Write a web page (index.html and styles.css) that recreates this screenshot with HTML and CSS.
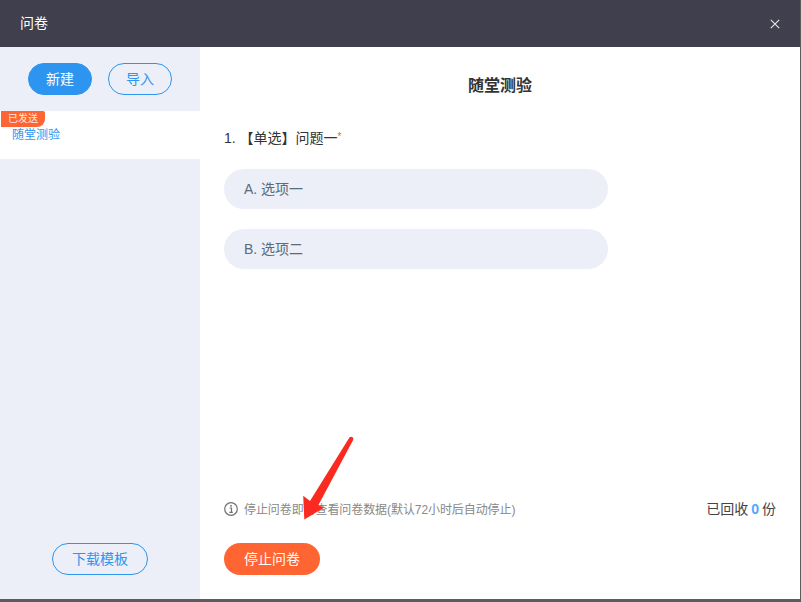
FILE: index.html
```html
<!DOCTYPE html>
<html lang="zh">
<head>
<meta charset="utf-8">
<title>问卷</title>
<link rel="stylesheet" href="styles.css">
</head>
<body>
<div class="dialog">
  <header class="header">
    <span class="header-title">问卷</span>
    <svg class="close" width="10" height="10" viewBox="0 0 10 10"><path d="M.8.8l8.400 8.400M9.200.8L.8 9.200" stroke="#e6e6ea" stroke-width="1.100" fill="none"/></svg>
  </header>
  <div class="body">
    <aside class="sidebar">
      <div class="side-actions">
        <button class="btn btn-solid">新建</button>
        <button class="btn btn-line">导入</button>
      </div>
      <div class="side-item">
        <span class="badge">已发送</span>
        <span class="side-name">随堂测验</span>
      </div>
      <div class="side-foot">
        <button class="btn btn-line btn-wide">下载模板</button>
      </div>
    </aside>
    <main class="main">
      <h1 class="title">随堂测验</h1>
      <p class="question">1. 【单选】问题一<sup class="req">*</sup></p>
      <div class="option">A. 选项一</div>
      <div class="option">B. 选项二</div>
      <div class="foot">
        <div class="foot-row">
          <div class="hint">
            <svg width="14" height="14" viewBox="0 0 14 14"><circle cx="7" cy="7" r="6.300" fill="none" stroke="#707070" stroke-width="1.200"/><rect x="6.200" y="3" width="1.600" height="1.600" fill="#707070"/><path d="M5.600 6h1.900v4.100M5.400 10.300h3.400" fill="none" stroke="#707070" stroke-width="1.200"/></svg>
            <span class="hint-text">停止问卷即可查看问卷数据(默认72小时后自动停止)</span>
          </div>
          <div class="count">已回收<b>0</b>份</div>
        </div>
        <button class="btn-stop">停止问卷</button>
      </div>
    </main>
  </div>
</div>
<svg class="arrow" width="60" height="90" viewBox="300 434 60 90"><path d="M349.400 437.600Q351 436.200 352.700 437.300Q353.700 438.400 353 440.200L318.200 505.500L324.500 507.400L304.300 519.500L303.200 495.700L310 501Z" fill="#fb2a20"/></svg>
</body>
</html>
```

FILE: styles.css
```css
* { box-sizing: border-box; }
html, body { margin: 0; height: 100%; }
body {
  width: 801px;
  height: 602px;
  overflow: hidden;
  background: #5c5c5c;
  font-family: "Liberation Sans", "Noto Sans CJK SC", sans-serif;
  position: relative;
}
.dialog {
  width: 800px;
  height: 599px;
  background: #fff;
  display: flex;
  flex-direction: column;
}
.header {
  height: 47px;
  flex: none;
  background: #403f4d;
  color: #fff;
  display: flex;
  align-items: center;
  justify-content: space-between;
  padding: 0 20px 0 20px;
  font-size: 14px;
}
.header-title { margin-bottom: 4px; }
.close { display: block; }
.body { flex: 1; display: flex; min-height: 0; }
.sidebar {
  width: 200px;
  flex: none;
  background: #eceff7;
  display: flex;
  flex-direction: column;
}
.side-actions {
  display: flex;
  justify-content: center;
  gap: 16px;
  padding-top: 16px;
  height: 64px;
}
.btn {
  width: 64px;
  height: 32px;
  border-radius: 16px;
  font: inherit;
  font-size: 14px;
  border: 1px solid #2d95f0;
  padding: 0 0 2px;
}
.btn-solid { background: #2d95f0; color: #fff; }
.btn-line { background: transparent; color: #2d95f0; }
.btn-wide { width: 96px; }
.side-item {
  height: 48px;
  background: #fff;
  position: relative;
  padding: 16px 0 0 12px;
  font-size: 12px;
  line-height: 17px;
  color: #2d95f0;
}
.badge {
  position: absolute;
  left: 1px;
  top: 0;
  width: 44px;
  height: 16px;
  background: #ff6533;
  border-radius: 0 2px 8px 0;
  color: #ffe9e2;
  font-size: 10px;
  line-height: 15px;
  text-align: center;
}
.side-foot {
  margin-top: auto;
  display: flex;
  justify-content: center;
  padding-bottom: 24px;
}
.main {
  flex: 1;
  padding: 0 24px 24px;
  display: flex;
  flex-direction: column;
  min-width: 0;
}
.title {
  margin: 28px 0 0;
  font-size: 16px;
  line-height: 22px;
  font-weight: 700;
  color: #333;
  text-align: center;
}
.question {
  margin: 31px 0 21px;
  font-size: 14px;
  line-height: 20px;
  color: #333;
}
.req {
  color: #ff5a3c;
  font-size: 10px;
  line-height: 0;
  vertical-align: 3px;
}
.option {
  width: 384px;
  height: 40px;
  border-radius: 20px;
  background: #eceff7;
  color: #5b6b78;
  font-size: 14px;
  line-height: 40px;
  padding-left: 20px;
  margin-bottom: 20px;
}
.foot { margin-top: auto; }
.foot-row {
  display: flex;
  align-items: center;
  justify-content: space-between;
  margin-bottom: 24px;
}
.hint {
  display: flex;
  align-items: center;
  gap: 6px;
  font-size: 12px;
  color: #888;
}
.hint-text { letter-spacing: -0.08px; padding-bottom: 1px; }
.hint svg { display: block; }
.count { font-size: 14px; color: #444; padding-bottom: 1px; }
.count b { color: #4aa8ff; font-weight: 700; margin: 0 3px; }
.btn-stop {
  display: block;
  width: 96px;
  height: 32px;
  border: 0;
  border-radius: 16px;
  background: #ff6533;
  color: #fff;
  font: inherit;
  font-size: 14px;
  padding: 0 0 2px;
}
.arrow {
  position: absolute;
  left: 300px;
  top: 434px;
}
```
